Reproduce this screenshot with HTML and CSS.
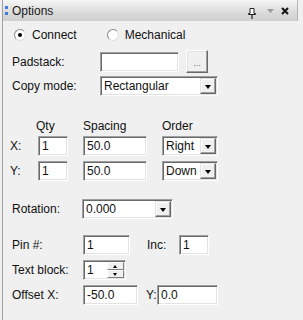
FILE: index.html
```html
<!DOCTYPE html>
<html>
<head>
<meta charset="utf-8">
<link rel="stylesheet" href="styles.css">
</head>
<body>
<div class="panel">
  <div class="titlebar">
    <span class="grip"><i></i><i></i></span>
    <span class="title">Options</span>
    <span class="tools">
      <svg class="pin" width="8" height="11" viewBox="0 0 8 11"><path d="M2 0.5h4v5h1.5v1h-7v-1h1.5z" fill="#fff" stroke="#222" stroke-width="1"/><path d="M4 7v4" stroke="#222" stroke-width="1.2"/></svg>
      <svg class="menu" width="7" height="4" viewBox="0 0 7 4"><path d="M0 0h7l-3.5 4z" fill="#9a9a9a"/></svg>
      <svg class="close" width="8" height="8" viewBox="0 0 8 8"><path d="M1 1l6 6M7 1l-6 6" stroke="#111" stroke-width="2"/></svg>
    </span>
  </div>
  <div class="content">
    <div class="row radios">
      <span class="radio checked"></span><span class="rlabel">Connect</span>
      <span class="radio second"></span><span class="rlabel">Mechanical</span>
    </div>
    <div class="row padrow">
      <span class="label w88">Padstack:</span>
      <span class="field" style="width:79px"></span>
      <span class="btn">...</span>
    </div>
    <div class="row copyrow">
      <span class="label w88">Copy mode:</span>
      <span class="field select" style="width:118px"><span class="val">Rectangular</span><span class="arrow"></span></span>
    </div>
    <div class="array">
      <div class="arow head">
        <span class="c1"></span>
        <span class="c2 qty">Qty</span>
        <span class="c3">Spacing</span>
        <span class="c4">Order</span>
      </div>
      <div class="arow xrow">
        <span class="c1">X:</span>
        <span class="c2"><span class="field" style="width:30px"><span class="val">1</span></span></span>
        <span class="c3"><span class="field" style="width:64px"><span class="val">50.0</span></span></span>
        <span class="c4"><span class="field select" style="width:56px"><span class="val">Right</span><span class="arrow"></span></span></span>
      </div>
      <div class="arow yrow">
        <span class="c1">Y:</span>
        <span class="c2"><span class="field" style="width:30px"><span class="val">1</span></span></span>
        <span class="c3"><span class="field" style="width:64px"><span class="val">50.0</span></span></span>
        <span class="c4"><span class="field select" style="width:56px"><span class="val">Down</span><span class="arrow"></span></span></span>
      </div>
    </div>
    <div class="row rotrow">
      <span class="label w70">Rotation:</span>
      <span class="field select" style="width:91px"><span class="val">0.000</span><span class="arrow"></span></span>
    </div>
    <div class="row pinrow">
      <span class="label w71">Pin #:</span>
      <span class="field" style="width:47px"><span class="val">1</span></span>
      <span class="label inc">Inc:</span>
      <span class="field" style="width:30px"><span class="val">1</span></span>
    </div>
    <div class="row textrow">
      <span class="label w71">Text block:</span>
      <span class="field spin" style="width:43px"><span class="val">1</span><span class="spinbtns"><span class="up"></span><span class="down"></span></span></span>
    </div>
    <div class="row offrow">
      <span class="label w71">Offset X:</span>
      <span class="field" style="width:55px"><span class="val">-50.0</span></span>
      <span class="label ylab">Y:</span>
      <span class="field" style="width:61px"><span class="val">0.0</span></span>
    </div>
  </div>
</div>
</body>
</html>
```
FILE: styles.css
```css
html, body {
  margin: 0;
  padding: 0;
  background: #f0f0f0;
}
body {
  width: 303px;
  height: 320px;
  overflow: hidden;
  font-family: "Liberation Sans", Arial, sans-serif;
  font-size: 12px;
  color: #111;
}
.panel {
  margin-left: 2px;
  border-left: 1px solid #a0a0a0;
  height: 320px;
  box-sizing: border-box;
}
.titlebar {
  width: 295px;
  height: 21px;
  box-sizing: border-box;
  border-right: 1px solid #b4b4b4;
  background: linear-gradient(#f6f6f6, #dadada 60%, #cfcfcf);
  display: flex;
  align-items: center;
  position: relative;
}
.grip {
  display: flex;
  flex-direction: column;
  gap: 3px;
  margin-left: 2px;
  width: 3px;
}
.grip i {
  display: block;
  width: 3px;
  height: 3px;
  background: #3a7fe0;
}
.title {
  margin-left: 4px;
  color: #1a1a1a;
}
.tools {
  margin-left: auto;
  display: flex;
  align-items: center;
  margin-right: 8px;
}
.pin { margin-top: 5px; }
.menu { margin-left: 11px; }
.close { margin-left: 7px; }
.content {
  padding-left: 9px;
}
.row {
  display: flex;
  align-items: center;
}
.label { display: inline-block; white-space: nowrap; }
.w88 { width: 88px; }
.w70 { width: 70px; }
.w71 { width: 71px; }
.radios {
  margin-top: 7px;
  height: 14px;
}
.radio {
  width: 12px;
  height: 12px;
  box-sizing: border-box;
  border-radius: 50%;
  border: 1px solid #8a8a8a;
  border-right-color: #dcdcdc;
  border-bottom-color: #dcdcdc;
  background: #fff;
  margin-left: 2px;
  position: relative;
}
.radio.checked::after {
  content: "";
  position: absolute;
  left: 3px;
  top: 3px;
  width: 4px;
  height: 4px;
  border-radius: 50%;
  background: #000;
}
.radio.second { margin-left: 30px; }
.rlabel { margin-left: 6px; }
.field {
  display: flex;
  align-items: center;
  height: 20px;
  box-sizing: border-box;
  background: #fff;
  border: 1px solid;
  border-color: #a0a0a0 #fff #fff #a0a0a0;
  box-shadow: inset 1px 1px 0 #696969, inset -1px -1px 0 #e3e3e3;
  position: relative;
}
.val { padding-left: 3px; line-height: 14px; }
.padrow {
  margin-top: 8px;
  height: 23px;
}
.btn {
  margin-left: 7px;
  width: 22px;
  height: 23px;
  box-sizing: border-box;
  border: 1px solid;
  border-color: #fff #696969 #696969 #fff;
  box-shadow: inset -1px -1px 0 #a0a0a0, inset 1px 1px 0 #e3e3e3;
  background: #f0f0f0;
  font-size: 9px;
  color: #666;
  display: flex;
  align-items: center;
  justify-content: center;
  padding-top: 3px;
}
.copyrow {
  margin-top: 3px;
  height: 20px;
}
.select .arrow {
  position: absolute;
  right: 1px;
  top: 1px;
  width: 16px;
  height: 16px;
  box-sizing: border-box;
  background: #f0f0f0;
  border: 1px solid;
  border-color: #e3e3e3 #696969 #696969 #e3e3e3;
  box-shadow: inset -1px -1px 0 #a0a0a0, inset 1px 1px 0 #fff;
}
.select .arrow::after {
  content: "";
  position: absolute;
  left: 4px;
  top: 6px;
  border-left: 3.5px solid transparent;
  border-right: 3.5px solid transparent;
  border-top: 4px solid #000;
}
.array {
  margin-left: -2px;
  margin-top: 23px;
}
.arow {
  display: flex;
  align-items: center;
}
.arow .c1 { width: 28px; }
.arow .c2 { width: 45px; }
.arow .c3 { width: 79px; }
.arow .c4 { width: 60px; }
.head { height: 14px; }
.head .qty { margin-left: -2px; width: 47px; }
.xrow { margin-top: 3px; height: 20px; }
.yrow { margin-top: 5px; height: 20px; }
.rotrow { margin-top: 18px; height: 20px; }
.pinrow { margin-top: 16px; height: 20px; }
.inc { margin-left: 17px; width: 32px; }
.textrow { margin-top: 5px; height: 20px; }
.spinbtns {
  position: absolute;
  right: 1px;
  top: 1px;
  width: 17px;
  height: 16px;
  display: flex;
  flex-direction: column;
}
.spinbtns span {
  flex: 1;
  box-sizing: border-box;
  border: 1px solid;
  border-color: #fff #808080 #808080 #fff;
  background: #f0f0f0;
  position: relative;
}
.spinbtns .up::after, .spinbtns .down::after {
  content: "";
  position: absolute;
  left: 5px;
  border-left: 2.5px solid transparent;
  border-right: 2.5px solid transparent;
}
.spinbtns .up::after { top: 2px; border-bottom: 3px solid #000; }
.spinbtns .down::after { top: 2px; border-top: 3px solid #000; }
.offrow { margin-top: 5px; height: 20px; }
.ylab { margin-left: 8px; width: 11px; }
```
